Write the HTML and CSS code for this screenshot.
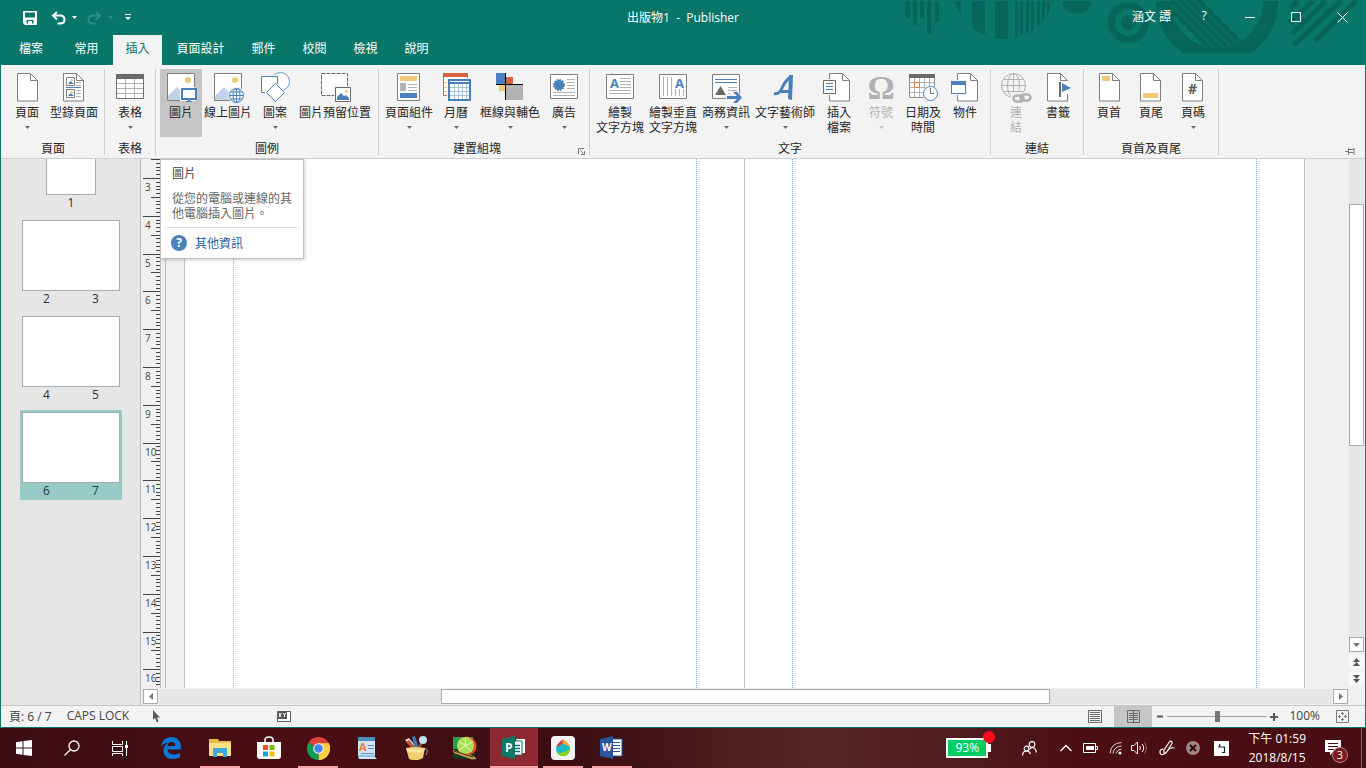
FILE: index.html
```html
<!DOCTYPE html>
<html lang="zh-Hant">
<head>
    <meta charset="UTF-8">
    <meta name="viewport" content="width=device-width, initial-scale=1.0">
    <title>出版物1 - Publisher</title>
    <link rel="stylesheet" href="styles.css">
</head>
<body>
    <!-- shared shapes -->
    <svg class="defs" width="0" height="0" aria-hidden="true">
        <symbol id="sheet" viewBox="0 0 22 29">
            <path d="M.5.5h13l7 7v20.500h-20z" fill="#fff" stroke="#7f7f7f"/>
            <path d="M13.500.5v7h7" fill="none" stroke="#7f7f7f"/>
        </symbol>
        <symbol id="photo" viewBox="0 0 28 28">
            <path d="M.5.5h27v27h-27z" fill="#fff" stroke="#7f7f7f"/>
            <path d="M1 23l9-9 13 13H1z" fill="#c0d3e8"/>
            <circle cx="21" cy="7" r="3" fill="#f0c878"/>
        </symbol>
        <symbol id="caret" viewBox="0 0 5 3"><path d="M0 0h5L2.500 3z" fill="currentColor"/></symbol>
    </svg>

    <div class="window">
        <header class="titlebar">
            <svg class="pattern" width="486" height="65" viewBox="0 0 486 65" aria-hidden="true">
                <defs>
                    <clipPath id="disc"><circle cx="125" cy="-12" r="51"/></clipPath>
                    <clipPath id="bowl"><circle cx="338" cy="2" r="46"/></clipPath>
                    <clipPath id="cut"><path d="M270 1h140v52H270z"/></clipPath>
                </defs>
                <g fill="#07655a">
                    <path d="M26 1h5v17h-5zM34 1h4v24h-4zM41 1h4v17h-4zM48 1h4v33h-4zM56 1h4v21h-4z"/>
                    <path clip-path="url(#disc)" d="M70 1h12v50H70zM93 1h13v50H93zM116 1h13v50h-13zM136 1h3v50h-3zM141 1h3v50h-3zM147 1h3v50h-3zM152 1h3v50h-3zM158 1h3v50h-3zM163 1h3v50h-3zM168 1h3v50h-3zM173 1h3v50h-3z"/>
                    <path d="M183 1h29a14.500 12.500 0 0 1-29 0z"/>
                    <circle cx="249.500" cy="22.500" r="7.500"/>
                </g>
                <g fill="none" stroke="#07655a">
                    <circle cx="249.500" cy="22.500" r="17" stroke-width="7"/>
                    <circle cx="338" cy="2" r="53.500" stroke-width="15" clip-path="url(#cut)"/>
                    <path clip-path="url(#bowl)" stroke-width="5" d="M316-3l60 60M307-3l60 60M298-3l60 60M289-3l60 60M277-6l60 60"/>
                    <path stroke-width="5" d="M477 1l-41 40M462 1l-47 44M447 1l-34 33M434 1l-24 22M419 1l-8 7"/>
                </g>
            </svg>
            <div class="quick">
                <button type="button" aria-label="儲存"><svg width="14" height="14" viewBox="0 0 14 14"><path fill="#fff" fill-rule="evenodd" d="M0 0h14v14H2l-2-2zM2 1.500v5h10v-5zM3.500 9v3.500H5V10h4v2.500h1.500V9z"/></svg></button>
                <button type="button" aria-label="復原"><svg width="15" height="14" viewBox="0 0 15 14"><path fill="none" stroke="#fff" stroke-width="2" d="M6 1L2 4.500 6 8.500M2 4.500h7q4.500 0 4.500 4T9 12.500H6.500"/></svg></button>
                <button type="button" aria-label="復原選項"><svg width="5" height="3"><use href="#caret"/></svg></button>
                <button type="button" class="dim" aria-label="重做"><svg width="15" height="14" viewBox="0 0 15 14"><path fill="none" stroke="#2f8e83" stroke-width="2" d="M9 1l4 3.500L9 8.500M13 4.500H6Q1.500 4.500 1.500 8.500T6 12.500h2.500"/></svg></button>
                <button type="button" class="dim" aria-label="重做選項"><svg width="5" height="3"><use href="#caret"/></svg></button>
                <button type="button" class="more" aria-label="自訂"><svg width="6" height="7" viewBox="0 0 6 7"><path fill="#fff" d="M0 0h6v1H0zM0 3h6L3 6z"/></svg></button>
            </div>
            <h1>出版物1&nbsp; -&nbsp; Publisher</h1>
            <div class="controls">
                <span class="user">涵文 譚</span>
                <button type="button" class="help">?</button>
                <button type="button" aria-label="最小化"><svg width="11" height="11"><path d="M0 5.500h10" stroke="#fff"/></svg></button>
                <button type="button" aria-label="最大化"><svg width="11" height="11"><path d="M.5.5h9v9h-9z" fill="none" stroke="#fff"/></svg></button>
                <button type="button" aria-label="關閉"><svg width="11" height="11"><path d="M.5.5l10 10M10.500.5l-10 10" stroke="#fff"/></svg></button>
            </div>
        </header>

        <nav class="tabs">
            <a href="#" class="file">檔案</a>
            <a href="#">常用</a>
            <a href="#" class="active">插入</a>
            <a href="#" class="long">頁面設計</a>
            <a href="#">郵件</a>
            <a href="#">校閱</a>
            <a href="#">檢視</a>
            <a href="#">說明</a>
        </nav>

        <div class="ribbon">
            <section class="group">
                <div class="tools">
                    <button type="button" class="tool">
                        <svg class="icon" viewBox="0 0 32 32"><use href="#sheet" x="6" y="2" width="22" height="29"/></svg>
                        <span>頁面</span><svg class="caret"><use href="#caret"/></svg>
                    </button>
                    <button type="button" class="tool w4">
                        <svg class="icon" viewBox="0 0 32 32"><use href="#sheet" x="5" y="2" width="22" height="29"/>
                            <path d="M8.500 6.500h8v8h-8zM8.500 18.500h8v8h-8z" fill="#fff" stroke="#7f7f7f"/>
                            <path d="M10 13l2.500-3 3.500 3zM10 25l2.500-3 3.500 3zM8 16h15v1H8z" fill="#4a80bb"/>
                            <path d="M13 8h2v2h-2zM13 20h2v2h-2z" fill="#f0c878"/>
                            <path d="M18 11.500h5M18 14.500h5M18 19.500h5M18 22.500h5M18 25.500h5" stroke="#b2b2b2"/></svg>
                        <span>型錄頁面</span>
                    </button>
                </div>
                <h2>頁面</h2>
            </section>

            <section class="group">
                <div class="tools">
                    <button type="button" class="tool">
                        <svg class="icon" viewBox="0 0 32 32"><path d="M2.500 3.500h27v24h-27z" fill="#fff" stroke="#6f6f6f"/>
                            <path d="M2 3h28v5H2z" fill="#6a6a6a"/>
                            <path d="M11.500 8v19M20.500 8v19M3 12.500h26M3 17.500h26M3 22.500h26" stroke="#b2b2b2"/></svg>
                        <span>表格</span><svg class="caret"><use href="#caret"/></svg>
                    </button>
                </div>
                <h2>表格</h2>
            </section>

            <section class="group">
                <div class="tools">
                    <div class="hint">
                        <button type="button" class="tool pressed">
                            <svg class="icon" viewBox="0 0 32 32"><use href="#photo" x="2" y="2" width="28" height="28"/>
                                <path d="M15 16h17v16H15z" fill="#c6c6c6"/><path d="M15 16h15v14H15z" fill="#fff"/>
                                <path d="M17 18h14v10H17z" fill="#fff" stroke="#4a80bb" stroke-width="2"/>
                                <path d="M23 29h2v1h2v1h-6v-1h2z" fill="#4a80bb"/></svg>
                            <span>圖片</span>
                        </button>
                        <div class="tooltip" role="tooltip">
                            <h3>圖片</h3>
                            <p>從您的電腦或連線的其他電腦插入圖片。</p>
                            <a href="#"><span class="mark">?</span>其他資訊</a>
                        </div>
                    </div>
                    <button type="button" class="tool w4">
                        <svg class="icon" viewBox="0 0 32 32"><use href="#photo" x="2" y="2" width="28" height="28"/>
                            <circle cx="24.500" cy="24.500" r="7" fill="#fff" stroke="#f3f3f3" stroke-width="3"/>
                            <g fill="#fff" stroke="#4a80bb"><circle cx="24.500" cy="24.500" r="7"/><ellipse cx="24.500" cy="24.500" rx="3.500" ry="7"/><path d="M24.500 17.500v14M17.500 24.500h14M18.500 21h12M18.500 28h12"/></g></svg>
                        <span>線上圖片</span>
                    </button>
                    <button type="button" class="tool">
                        <svg class="icon" viewBox="0 0 32 32"><circle cx="21.500" cy="10.500" r="9" fill="#fff" stroke="#6f9bd0"/>
                            <path d="M1 4h19v19H1z" fill="#f3f3f3"/><path d="M2.500 5.500h16v16h-16z" fill="#fff" stroke="#4a80bb"/>
                            <path d="M16.500 10.500l11 11-11 11-11-11z" fill="#f3f3f3"/><path d="M16.500 12.500l9 9-9 9-9-9z" fill="#fff" stroke="#4a80bb"/></svg>
                        <span>圖案</span><svg class="caret"><use href="#caret"/></svg>
                    </button>
                    <button type="button" class="tool w6">
                        <svg class="icon" viewBox="0 0 32 32"><path d="M2.500 2.500h26v22h-26z" fill="#fff" stroke="#6a6a6a" stroke-dasharray="4 1"/>
                            <path d="M15 15h17v17H15z" fill="#f3f3f3"/><path d="M16.500 16.500h15v14h-15z" fill="#fff" stroke="#6a6a6a"/>
                            <path d="M18 29v-3l4-4 3 3 2-1 3 3v2z" fill="#4a80bb"/><circle cx="27.500" cy="20.500" r="1.500" fill="#f0c878"/></svg>
                        <span>圖片預留位置</span>
                    </button>
                </div>
                <h2>圖例</h2>
            </section>

            <section class="group has-launcher">
                <div class="tools">
                    <button type="button" class="tool w4">
                        <svg class="icon" viewBox="0 0 32 32"><path d="M4.500 2.500h22v27h-22z" fill="#fff" stroke="#7f7f7f"/>
                            <path d="M7 5h17v5H7z" fill="#f0c878"/><path d="M7 12h6v8H7z" fill="#b2b2b2"/>
                            <path d="M15 13.500h9M15 16.500h9M15 19.500h9" stroke="#b2b2b2"/><path d="M7 22h17v5H7z" fill="#4a80bb"/></svg>
                        <span>頁面組件</span><svg class="caret"><use href="#caret"/></svg>
                    </button>
                    <button type="button" class="tool">
                        <svg class="icon" viewBox="0 0 32 32"><path d="M3.500 2.500h24v22h-24z" fill="#fff" stroke="#d8603f"/><path d="M3 2h25v4H3z" fill="#d8603f"/>
                            <path d="M7.500 7v17M11.500 7v2M15.500 7v2M19.500 7v2M23.500 7v2" stroke="#f0c878" stroke-dasharray="2 1"/>
                            <path d="M4 11.500h4M4 16.500h4M4 20.500h4" stroke="#f0c878"/>
                            <path d="M7 7h25v25H7z" fill="#f3f3f3"/>
                            <path d="M9 9h21v20H9z" fill="#fff" stroke="#4a80bb" stroke-width="2"/><path d="M9 9h21v4H9z" fill="#4a80bb"/><path d="M10 10h19v1H10z" fill="#fff"/>
                            <path d="M14.500 13v15M18.500 13v15M22.500 13v15M26.500 13v15M10 16.500h19M10 20.500h19M10 24.500h19" stroke="#a9c3e0"/></svg>
                        <span>月曆</span><svg class="caret"><use href="#caret"/></svg>
                    </button>
                    <button type="button" class="tool w5">
                        <svg class="icon" viewBox="0 0 32 32"><path d="M2 2h9v11H2z" fill="#4a80bb"/><path d="M12 6h7v7h-7z" fill="#d8603f"/><path d="M5 14h6v6H5z" fill="#f0c878"/><path d="M12 14h17v15H12z" fill="#b2b2b2"/><path d="M11.500 2v27M2 13.500h27" stroke="#000"/></svg>
                        <span>框線與輔色</span><svg class="caret"><use href="#caret"/></svg>
                    </button>
                    <button type="button" class="tool">
                        <svg class="icon" viewBox="0 0 32 32"><path d="M2.500 3.500h27v24h-27z" fill="#fff" stroke="#7f7f7f"/>
                            <circle cx="11" cy="14" r="5" fill="#4a80bb"/><circle cx="11" cy="14" r="5" fill="none" stroke="#4a80bb" stroke-width="2" stroke-dasharray="1.600 1"/>
                            <path d="M19 8.500h8M19 11.500h8M19 14.500h8M19 17.500h8M5 21.500h22M5 24.500h22" stroke="#b2b2b2"/></svg>
                        <span>廣告</span><svg class="caret"><use href="#caret"/></svg>
                    </button>
                </div>
                <h2>建置組塊</h2>
                <button type="button" class="launcher" aria-label="建置組塊選項"><svg width="7" height="7"><path d="M.5 6V.5H6" fill="none" stroke="#777"/><path d="M2.500 2.500l3 3M6.500 3v3.500H3" fill="none" stroke="#777"/></svg></button>
            </section>

            <section class="group">
                <div class="tools">
                    <button type="button" class="tool w4">
                        <svg class="icon" viewBox="0 0 32 32"><path d="M2.500 3.500h27v24h-27z" fill="#fff" stroke="#7f7f7f"/>
                            <text x="6" y="17" font-size="13" font-weight="bold" fill="#4a80bb">A</text>
                            <path d="M16 7.500h11M16 10.500h11M16 13.500h11M16 16.500h11M5 19.500h22M5 22.500h22" stroke="#b2b2b2"/></svg>
                        <span>繪製<br>文字方塊</span>
                    </button>
                    <button type="button" class="tool w4 wide">
                        <svg class="icon" viewBox="0 0 32 32"><path d="M2.500 3.500h27v24h-27z" fill="#fff" stroke="#7f7f7f"/>
                            <text x="18" y="17" font-size="13" font-weight="bold" fill="#4a80bb">A</text>
                            <path d="M6.500 6v19M10.500 6v19M14.500 6v19M18.500 18v7M22.500 18v7M26.500 18v7" stroke="#b2b2b2"/></svg>
                        <span>繪製垂直<br>文字方塊</span>
                    </button>
                    <button type="button" class="tool w4">
                        <svg class="icon" viewBox="0 0 32 32"><path d="M2.500 3.500h27v24h-27z" fill="#fff" stroke="#7f7f7f"/>
                            <path d="M5 8.500h22M5 11.500h22" stroke="#4a80bb"/><path d="M5 24l5.500-9 5.500 9z" fill="#6a6a6a"/>
                            <path d="M18 16.500h9M18 19.500h9M18 22.500h2" stroke="#b2b2b2"/>
                            <path d="M16 23h8l-3-3h6l6 6.500-5 5.500h-6l2-3h-8z" fill="#f3f3f3"/>
                            <path d="M17 25h10l-4-4h4l5 5.500-5 5.500h-4l4-4H17z" fill="#4a80bb"/></svg>
                        <span>商務資訊</span><svg class="caret"><use href="#caret"/></svg>
                    </button>
                    <button type="button" class="tool w5">
                        <svg class="icon" viewBox="0 0 32 32"><path d="M5 22.500Q10 24 13 17T22 5.500M12 20.500h9" fill="none" stroke="#4a80bb" stroke-width="3"/><path d="M20 4h4l-1 25-4-1z" fill="#4a80bb"/></svg>
                        <span>文字藝術師</span><svg class="caret"><use href="#caret"/></svg>
                    </button>
                    <button type="button" class="tool">
                        <svg class="icon" viewBox="0 0 32 32"><use href="#sheet" x="6" y="2" width="22" height="29"/>
                            <path d="M0 8h14v16H0z" fill="#f3f3f3"/><path d="M.5 9.500h12v13H.5z" fill="#fff" stroke="#6a6a6a"/>
                            <path d="M3 12.500h7M3 15.500h7M3 18.500h7" stroke="#4a80bb"/></svg>
                        <span>插入<br>檔案</span>
                    </button>
                    <button type="button" class="tool" disabled>
                        <svg class="icon" viewBox="0 0 32 32"><text x="16" y="28" font-size="34" font-weight="bold" text-anchor="middle" class="serif" fill="#b2b2b2">Ω</text></svg>
                        <span>符號</span><svg class="caret"><use href="#caret"/></svg>
                    </button>
                    <button type="button" class="tool">
                        <svg class="icon" viewBox="0 0 32 32"><path d="M2.500 3.500h25v23h-25z" fill="#fff" stroke="#8f8f8f"/><path d="M2 3h26v4H2z" fill="#6a6a6a"/>
                            <path d="M7.500 7v19M12.500 7v19M17.500 7v19M22.500 7v19M3 11.500h24M3 16.500h24M3 21.500h24" stroke="#b2b2b2"/>
                            <path d="M7.500 11.500h5v5h-5z" fill="#fff" stroke="#e07b33"/>
                            <circle cx="23.500" cy="22.500" r="8" fill="#f3f3f3"/><circle cx="23.500" cy="22.500" r="7" fill="#fff" stroke="#4a80bb"/><path d="M23.500 17v5.500H27" fill="none" stroke="#6a6a6a"/></svg>
                        <span>日期及<br>時間</span>
                    </button>
                    <button type="button" class="tool">
                        <svg class="icon" viewBox="0 0 32 32"><use href="#sheet" x="8" y="2" width="22" height="29"/>
                            <path d="M1 9h17v15H1z" fill="#f3f3f3"/><path d="M2.500 10.500h14v12h-14z" fill="#fff" stroke="#4a80bb"/><path d="M2 10h15v4H2z" fill="#4a80bb"/></svg>
                        <span>物件</span>
                    </button>
                </div>
                <h2>文字</h2>
            </section>

            <section class="group">
                <div class="tools">
                    <button type="button" class="tool" disabled>
                        <svg class="icon" viewBox="0 0 32 32"><g fill="none" stroke="#b2b2b2"><circle cx="13.500" cy="14.500" r="12"/><ellipse cx="13.500" cy="14.500" rx="6" ry="12"/><path d="M13.500 2v25M1 14.500h25M3 8.500h21M3 20.500h21"/></g>
                            <path d="M11 21h21v11H11z" fill="#f3f3f3"/><g fill="none" stroke="#b2b2b2" stroke-width="2.500"><rect x="13.500" y="24.500" width="10" height="6" rx="3"/><rect x="20.500" y="23.500" width="10" height="6" rx="3"/></g></svg>
                        <span>連<br>結</span>
                    </button>
                    <button type="button" class="tool">
                        <svg class="icon" viewBox="0 0 32 32"><use href="#sheet" x="5" y="2" width="22" height="29"/>
                            <path d="M19 10h8v13h-8z" fill="#f9f9f9"/><path d="M17 11h2v15h-2z" fill="#6a6a6a"/><path d="M20 12l9 5-9 4z" fill="#4a80bb"/></svg>
                        <span>書籤</span>
                    </button>
                </div>
                <h2>連結</h2>
            </section>

            <section class="group">
                <div class="tools">
                    <button type="button" class="tool">
                        <svg class="icon" viewBox="0 0 32 32"><use href="#sheet" x="6" y="2" width="22" height="29"/><path d="M9 5h8v5H9z" fill="#f0c878"/></svg>
                        <span>頁首</span>
                    </button>
                    <button type="button" class="tool">
                        <svg class="icon" viewBox="0 0 32 32"><use href="#sheet" x="5" y="2" width="22" height="29"/><path d="M8 22h15v5H8z" fill="#f0c878"/></svg>
                        <span>頁尾</span>
                    </button>
                    <button type="button" class="tool">
                        <svg class="icon" viewBox="0 0 32 32"><use href="#sheet" x="5" y="2" width="22" height="29"/><text x="11" y="23" font-size="14" font-weight="bold" fill="#5a5a5a">#</text></svg>
                        <span>頁碼</span><svg class="caret"><use href="#caret"/></svg>
                    </button>
                </div>
                <h2>頁首及頁尾</h2>
            </section>
            <button type="button" class="pin" aria-label="釘選功能區"><svg width="10" height="7"><path d="M0 3.500h3M3.500 0v7M3.500 1.500h5M3.500 4.500h5M9 0v7" fill="none" stroke="#777"/></svg></button>
        </div>

        <main class="workspace">
            <aside class="pages">
                <ol>
                    <li class="single"><div class="thumb"></div><span>1</span></li>
                    <li><div class="thumb"></div><span>2</span><span>3</span></li>
                    <li><div class="thumb"></div><span>4</span><span>5</span></li>
                    <li class="selected"><div class="thumb"></div><span>6</span><span>7</span></li>
                </ol>
            </aside>
            <div class="editor">
                <div class="view">
                    <svg class="ruler" id="ruler" aria-hidden="true"></svg>
                    <div class="canvas">
                        <div class="spread">
                            <div class="page"><div class="margins"></div></div>
                            <div class="page"><div class="margins"></div></div>
                        </div>
                    </div>
                    <div class="vscroll">
                        <div class="vtrack"><div class="thumbbar"></div></div>
                        <button type="button" class="arrow" aria-label="向下捲動"><svg width="7" height="4"><path d="M0 0h7L3.500 4z" fill="#777"/></svg></button>
                        <button type="button" class="jump" aria-label="上一頁"><svg width="7" height="8"><path d="M0 4l3.500-4L7 4zM0 8l3.500-4L7 8z" fill="#555"/></svg></button>
                        <button type="button" class="jump" aria-label="下一頁"><svg width="7" height="8"><path d="M0 0h7L3.500 4zM0 4h7L3.500 8z" fill="#555"/></svg></button>
                    </div>
                </div>
                <div class="hscroll">
                    <button type="button" class="arrow" aria-label="向左捲動"><svg width="4" height="7"><path d="M4 0v7L0 3.500z" fill="#777"/></svg></button>
                    <div class="htrack"><div class="thumbbar"></div></div>
                    <button type="button" class="arrow" aria-label="向右捲動"><svg width="4" height="7"><path d="M0 0v7l4-3.500z" fill="#777"/></svg></button>
                </div>
            </div>
        </main>

        <footer class="status">
            <span class="pageno">頁: 6 / 7</span>
            <span class="caps">CAPS LOCK</span>
            <svg class="pointer" width="8" height="13"><path d="M1 0v10l2-2 2 4.500 1.500-1L5 7.500h3z" fill="#5a5a5a"/></svg>
            <svg class="xy" width="14" height="11"><path d="M.5.5h13v10H.5z" fill="#fff" stroke="#5a5a5a"/><path d="M1 1h9v7H1z" fill="#5a5a5a"/><path d="M2 2l2 4M4 2L2 6M6 2l1.500 2L9 2M7.500 4v2" stroke="#fff" fill="none"/></svg>
            <div class="views">
                <button type="button" aria-label="單頁"><svg width="14" height="13"><path d="M.5.5h13v12H.5zM2 2.500h10M2 4.500h10M2 6.500h10M2 8.500h10M2 10.500h10" fill="none" stroke="#6a6a6a"/></svg></button>
                <button type="button" class="on" aria-label="雙頁"><svg width="13" height="13"><path d="M.5.5h12v12H.5zM6.500 1v11M2 3.500h9M2 5.500h9M2 7.500h9M2 9.500h9" fill="none" stroke="#6a6a6a"/></svg></button>
            </div>
            <div class="zoom">
                <button type="button" aria-label="縮小"><svg width="7" height="7"><path d="M0 3.500h6" stroke="#5a5a5a" stroke-width="2"/></svg></button>
                <input type="range" min="0" max="200" value="100" aria-label="縮放">
                <button type="button" aria-label="放大"><svg width="8" height="8"><path d="M0 4h8M4 0v8" stroke="#5a5a5a" stroke-width="2"/></svg></button>
                <span>100%</span>
                <button type="button" class="fit" aria-label="整頁"><svg width="13" height="13"><path d="M.5.5h12v12H.5z" fill="none" stroke="#7a7a7a"/><path d="M6.500 2v3M6.500 8v3M2 6.500h3M8 6.500h3M5 3.500h3M5 9.500h3M3.500 5v3M9.500 5v3" fill="none" stroke="#7a7a7a"/></svg></button>
            </div>
        </footer>
    </div>

    <div class="taskbar">
        <div class="system">
            <button type="button" aria-label="開始"><svg width="16" height="16"><path d="M0 2.200L6.500 1.200V7.500H0zM7.500 1L16 0v7.500H7.500zM0 8.500h6.500v6.300L0 13.800zM7.500 8.500H16V16l-8.500-1z" fill="#fff"/></svg></button>
            <button type="button" aria-label="搜尋"><svg width="16" height="16"><circle cx="10" cy="6" r="5" fill="none" stroke="#fff" stroke-width="1.300"/><path d="M6.500 9.500l-6 6" stroke="#fff" stroke-width="1.300"/></svg></button>
            <button type="button" aria-label="工作檢視"><svg width="16" height="15"><path d="M.5 0v3.500h10V0M.5 5.500h10v5H.5zM.5 15v-2.500h10V15M14.500 0v15" fill="none" stroke="#fff"/><path d="M13 4h3v3h-3z" fill="#fff"/></svg></button>
        </div>
        <div class="apps">
            <button type="button" aria-label="Edge"><svg width="22" height="22" viewBox="0 0 22 22"><path d="M1 9.500C2 3.500 6 0 11.500 0 17.500 0 21 4.500 21 10v2.500H7.500c.2 3.500 3 5 6.500 5 2.500 0 4.500-.7 6-1.700v4.500C18 21.500 15.500 22 13 22 7 22 3.500 18.500 3.500 13.500c0-3.500 1.800-6.200 5-8C5 5.800 2.500 7.500 1 9.500zM7.500 9h7.800c0-2.500-1.300-4-3.700-4S7.900 6.500 7.500 9z" fill="#0a78d7"/></svg></button>
            <button type="button" class="open" aria-label="檔案總管"><svg width="22" height="20" viewBox="0 0 22 20"><path d="M0 1h9l1 2h12v15H0z" fill="#e8bd4e"/><path d="M0 5h22v13H0z" fill="#fbe08a"/><path d="M4 19v-8q0-1 1-1h12q1 0 1 1v8h-4v-4H8v4z" fill="#3ba9de"/></svg></button>
            <button type="button" aria-label="Store"><svg width="24" height="24" viewBox="0 0 24 24"><path d="M8 7V4q0-3 4-3t4 3v3" fill="none" stroke="#fff" stroke-width="1.500"/><path d="M0 6h24v14q0 3-3 3H3q-3 0-3-3z" fill="#fff"/><path d="M6 9h5v5H6z" fill="#f25022"/><path d="M12.500 9h5v5h-5z" fill="#7fba00"/><path d="M6 15.500h5v5H6z" fill="#00a4ef"/><path d="M12.500 15.500h5v5h-5z" fill="#ffb900"/></svg></button>
            <button type="button" class="open" aria-label="Chrome"><svg width="23" height="23" viewBox="0 0 24 24"><path d="M12 12L1.600 6A12 12 0 0 1 22.400 6z" fill="#db4437"/><path d="M12 12L22.400 6A12 12 0 0 1 12 24z" fill="#ffcd40"/><path d="M12 12v12A12 12 0 0 1 1.600 6z" fill="#0f9d58"/><path d="M12 6.500h10.600A12 12 0 0 1 12 24l5-9z" fill="#ffcd40"/><circle cx="12" cy="12" r="5.500" fill="#f1f1f1"/><circle cx="12" cy="12" r="4.400" fill="#4285f4"/></svg></button>
            <button type="button" aria-label="WordPad"><svg width="20" height="22" viewBox="0 0 20 22"><path d="M1 2h17v18l2 2H2l-1-3z" fill="#cfe4f5"/><path d="M1 0h17v4H1z" fill="#4b8fc0"/><path d="M11 8.500h6M11 11.500h6M4 16.500h13" stroke="#5f8fba"/><path d="M1 18h17v2H1z" fill="#8fbfe0"/><text x="2" y="14" font-size="11" font-weight="bold" fill="#ee7d22">A</text></svg></button>
            <button type="button" aria-label="小畫家"><svg width="23" height="24" viewBox="0 0 23 24"><path d="M0 4l4-2 9 11-4 1z" fill="#e8e0d8"/><path d="M1 6l3-2 8 9-3 1z" fill="#c8543b"/><path d="M7 1l3-1 4 13-4 1z" fill="#3e79bd"/><path d="M12 12l5-9 2 1-4 9z" fill="#8b5a2b"/><circle cx="18" cy="4" r="4" fill="#bfe0f2"/><path d="M20 12q4 2 1 7" fill="none" stroke="#999"/><path d="M1 12q9-2 19 0l-2 10q-7 4-14 1z" fill="#f2cf73"/><path d="M1 12q9 3 19 0l-1 3q-8 3-17 0z" fill="#f9e3a5"/></svg></button>
            <button type="button" aria-label="繪圖"><svg width="24" height="24" viewBox="0 0 24 24"><path d="M0 1h20v22H0z" fill="#2b9e4a"/><path d="M0 13h22v10H0z" fill="#123a20"/><circle cx="14" cy="10" r="9.500" fill="#e4502a"/><circle cx="12.500" cy="9.500" r="8.500" fill="#a8e05a"/><path d="M12.500 9.500V2M12.500 9.500L20 6M12.500 9.500l-7-4M12.500 9.500l6 6M12.500 9.500l-7 5" stroke="#e6f7b8"/><path d="M0 14l20 6 4 3-5 .5L1 17z" fill="#c9a055"/><path d="M1 15l19 6" stroke="#4a2c12"/></svg></button>
            <button type="button" class="open current" aria-label="Publisher"><svg width="24" height="24" viewBox="0 0 24 24"><path d="M14 3h9v14h-3" fill="#fff"/><path d="M11 5h9v14h-9z" fill="#fff" stroke="#0a7567"/><path d="M13 9.500h5M13 12.500h5M13 15.500h5" stroke="#0a7567" stroke-width="1.500"/><path d="M0 3l13-3v23L0 20z" fill="#08796b"/><text x="3" y="16" font-size="12" font-weight="bold" fill="#fff">P</text></svg></button>
            <button type="button" class="open" aria-label="MediBang"><svg width="24" height="24" viewBox="0 0 24 24"><rect width="24" height="24" rx="4" fill="#f2f2f2"/><circle cx="12" cy="13" r="7" fill="#17b8c9"/><path d="M5.500 11Q7 6 12 3.500q1 5-6.500 7.500z" fill="#f02d3a"/><path d="M12 3.500q5 2 6.500 7l-7-3z" fill="#f6a623"/><path d="M6 16.500q8 1 13-4-.5 7.500-7 7.500-4 0-6-3.500z" fill="#8fd11a"/></svg></button>
            <button type="button" class="open" aria-label="Word"><svg width="24" height="24" viewBox="0 0 24 24"><path d="M12 3h10v17H12z" fill="#fff" stroke="#2a5699"/><path d="M13 6.500h7M13 9.500h7M13 12.500h7M13 15.500h7" stroke="#2a5699"/><path d="M0 3l13-3v23L0 20z" fill="#2a5699"/><text x="2" y="15" font-size="10" font-weight="bold" fill="#fff">W</text></svg></button>
        </div>
        <div class="tray">
            <div class="battery"><span>93%</span></div>
            <button type="button" class="people" aria-label="連絡人"><svg width="15" height="15"><g fill="none" stroke="#fff" stroke-width="1.200"><circle cx="10" cy="3.500" r="2.800"/><circle cx="4.500" cy="7.500" r="2.300"/><path d="M.6 14.500q0-4.500 4-4.500 3 0 3.800 3M7.500 8.500q1-2 3-2 3.500.5 3.800 5"/></g></svg></button>
            <button type="button" aria-label="顯示隱藏的圖示"><svg width="12" height="8"><path d="M.5 7L6 1.500 11.500 7" fill="none" stroke="#fff" stroke-width="1.300"/></svg></button>
            <button type="button" aria-label="電源"><svg width="15" height="10"><path d="M.5.5h12v9H.5zM13 3.500h1.500v3H13" fill="none" stroke="#fff"/><path d="M3 3h8v4H3z" fill="#fff"/></svg></button>
            <button type="button" aria-label="網路"><svg width="14" height="14"><path d="M1 12.500Q2 2 12.500 1.500M4 12.500Q5 5.500 12.500 5M7 12.500Q8 8.500 12.500 8" fill="none" stroke="#ddd"/><circle cx="11" cy="12" r="1.500" fill="#fff"/></svg></button>
            <button type="button" class="volume" aria-label="音量"><svg width="17" height="14"><path d="M.5 4.500H3L6.500 1v12L3 9.500H.5zM8.500 5q2 2 0 4M11 3q3.500 4 0 8" fill="none" stroke="#fff"/><path d="M13.500 1.500q4 5.500 0 11" fill="none" stroke="#926467"/></svg></button>
            <button type="button" aria-label="手寫筆"><svg width="16" height="16"><path d="M5 10L11 1q2.500 0 2 2.500L7 13H5zM4.500 9Q1 9 1 12t3 2.500q2 0 4-3t4-3.500 3.500 0" fill="none" stroke="#fff" stroke-width="1.200"/></svg></button>
            <button type="button" aria-label="已中斷"><svg width="14" height="14"><circle cx="7" cy="7" r="7" fill="#9c8487"/><path d="M4 4l6 6M10 4l-6 6" stroke="#37090e" stroke-width="2"/></svg></button>
            <button type="button" class="ime" aria-label="輸入法"><svg width="15" height="15"><path d="M0 0h15v15H0z" fill="#fff"/><path d="M6 3L5 6h5.500v5.500H8" fill="none" stroke="#222" stroke-width="1.200"/></svg></button>
            <div class="clock"><time>下午 01:59</time><time>2018/8/15</time></div>
            <button type="button" class="notice" aria-label="通知"><svg width="16" height="16"><path d="M0 0h16v12H8l-3 3.500V12H0z" fill="#fff"/><path d="M3 3.500h10M3 6.500h10M3 9.500h6" stroke="#4b0f14"/></svg><span class="badge">3</span></button>
            <div class="desktop"></div>
        </div>
    </div>

    <script>
        // vertical ruler: one long tick per centimetre, 10 divisions
        const ruler = document.getElementById('ruler');
        const cm = 96 / 2.54;
        let marks = '';

        for (let i = 25; i <= 165; i++) {
            const y = Math.round(19 + (i / 10 - 3) * cm) + 0.5;
            const x = i % 10 === 0 ? 2 : i % 5 === 0 ? 10 : 15;
            marks += `<path d="M${x} ${y}H19"/>`;
            if (i % 10 === 0) {
                marks += `<text x="4" y="${y + 12}">${i / 10}</text>`;
            }
        }
        ruler.innerHTML = marks;
    </script>
</body>
</html>
```
FILE: styles.css
```css
* {
    box-sizing: border-box;
    margin: 0;
    padding: 0;
}

body {
    display: flex;
    flex-direction: column;
    height: 100vh;
    overflow: hidden;
    font-family: 'Open Sans', 'Noto Sans CJK TC', sans-serif;
    font-size: 12px;
    color: #262626;
}

button {
    display: flex;
    align-items: center;
    justify-content: center;
    border: none;
    background: none;
    color: inherit;
    font: inherit;
}

a {
    color: inherit;
    text-decoration: none;
}

svg {
    display: block;
}

.defs {
    position: absolute;
}

.window {
    flex: 1;
    min-height: 0;
    display: flex;
    flex-direction: column;
    border: 1px solid #087668;
    border-top: none;
}

/* title bar */
.titlebar {
    position: relative;
    display: grid;
    grid-template-columns: 1fr auto 1fr;
    align-items: center;
    height: 35px;
    background-color: #087668;
    color: #fff;
}

.pattern {
    position: absolute;
    top: 0;
    right: 0;
    z-index: 1;
}

.quick {
    display: flex;
    align-items: center;
    gap: 6px;
    padding-left: 22px;
}

.quick button:nth-child(2) {
    margin-left: 8px;
}

.quick .dim {
    color: #2f8e83;
}

.quick button:nth-child(4) {
    margin-left: 4px;
}

.quick .more {
    margin-left: 6px;
}

.titlebar h1 {
    padding-bottom: 2px;
    font-size: 12px;
    font-weight: normal;
}

.controls {
    position: relative;
    z-index: 2;
    display: flex;
    align-items: center;
    justify-content: flex-end;
}

.controls button {
    width: 46px;
    height: 32px;
}

.controls .user {
    margin-right: 10px;
    padding-bottom: 4px;
}

.controls .help {
    padding-bottom: 4px;
}

/* tabs */
.tabs {
    display: flex;
    height: 30px;
    background-color: #087668;
    color: #fff;
    line-height: 28px;
    text-align: center;
}

.tabs a {
    width: 51px;
}

.tabs .file {
    width: 60px;
}

.tabs .long {
    width: 75px;
}

.tabs .active {
    width: 49px;
    margin: 0 1px;
    background-color: #f3f3f3;
    color: #087668;
}

/* ribbon */
.ribbon {
    display: flex;
    padding: 4px 0 3px 1px;
    background-color: #f3f3f3;
    border-bottom: 1px solid #d0d0d0;
}

.group {
    position: relative;
    padding: 0 4px;
    border-right: 1px solid #d0d0d0;
}

.group h2 {
    margin-top: 6px;
    font-size: 12px;
    font-weight: normal;
    line-height: 12px;
    text-align: center;
}

.has-launcher h2 {
    padding-right: 14px;
}

.tools {
    display: flex;
    height: 68px;
}

.tool {
    flex-direction: column;
    justify-content: flex-start;
    width: 42px;
    height: 68px;
    line-height: 15px;
    white-space: nowrap;
}

.tool.w4 {
    width: 52px;
}

.tool.wide {
    width: 54px;
}

.tool.w5 {
    width: 66px;
}

.tool.w6 {
    width: 78px;
}

.tool.pressed {
    background-color: #c6c6c6;
}

.tool:disabled {
    color: #b2b2b2;
}

.tool .icon {
    flex: none;
    width: 32px;
    height: 32px;
    margin: 2px 0;
    overflow: visible;
}

.tool .caret {
    width: 5px;
    height: 3px;
    margin-top: 6px;
    color: #6a6a6a;
}

.tool:disabled .caret {
    color: #c6c6c6;
}

.serif {
    font-family: 'Liberation Serif', serif;
}

.launcher {
    position: absolute;
    right: 4px;
    bottom: 0;
}

.pin {
    margin-left: auto;
    margin-right: 10px;
    align-self: flex-end;
}

/* tooltip */
.hint {
    position: relative;
}

.tooltip {
    position: absolute;
    top: 90px;
    left: 0;
    z-index: 5;
    width: 144px;
    height: 100px;
    padding: 6px 5px;
    background-color: #fff;
    border: 1px solid #c0c0c0;
    box-shadow: 1px 1px 3px rgba(0,0,0,0.2);
    color: #666;
    line-height: 15px;
}

.tooltip h3 {
    padding-left: 6px;
    font-size: 12px;
    font-weight: normal;
    color: #444;
}

.tooltip p {
    padding: 10px 6px 6px;
    border-bottom: 1px solid #dcdcdc;
}

.tooltip a {
    display: flex;
    align-items: center;
    gap: 8px;
    padding: 7px 5px;
    color: #1f5f9c;
}

.mark {
    width: 16px;
    height: 16px;
    border-radius: 50%;
    background-color: #4a80bb;
    color: #fff;
    font-weight: bold;
    line-height: 16px;
    text-align: center;
}

/* workspace */
.workspace {
    flex: 1;
    min-height: 0;
    display: flex;
    background-color: #f0f0f0;
}

.pages {
    width: 140px;
    overflow: hidden;
    background-color: #e6e6e6;
    border-right: 1px solid #bcbcbc;
}

/* list is scrolled down a little */
.pages ol {
    display: flex;
    flex-direction: column;
    gap: 6px;
    margin: -37px 0 0 19px;
    list-style: none;
}

.pages li {
    display: flex;
    flex-wrap: wrap;
    width: 102px;
    height: 90px;
    padding: 2px;
    color: #333;
    line-height: 15px;
    text-align: center;
}

.pages li.selected {
    background-color: #99cbc6;
}

.thumb {
    width: 98px;
    height: 71px;
    background-color: #fff;
    border: 1px solid #a8acb4;
}

.single .thumb {
    width: 50px;
    margin: 0 24px;
}

.pages li span {
    flex: 1;
}

.editor {
    flex: 1;
    min-width: 0;
    display: flex;
    flex-direction: column;
}

.view {
    flex: 1;
    min-height: 0;
    display: flex;
}

.ruler {
    width: 20px;
    height: 100%;
    overflow: hidden;
    border-right: 1px solid #bcbcbc;
    stroke: #444;
}

.ruler text {
    stroke: none;
    fill: #444;
    font-size: 10px;
}

.canvas {
    flex: 1;
    margin-left: 4px;
    padding: 0 44px 0 18px;
    border-left: 1px solid #bcbcbc;
}

.spread {
    display: flex;
    height: 100%;
    background-color: #fff;
    border-left: 1px solid #c0c0c0;
}

.page {
    flex: 1;
    border-right: 1px solid #c0c0c0;
}

.margins {
    height: 100%;
    margin: 0 47px 0 48px;
    border: 1px dotted #5cc8e8;
    border-width: 0 1px;
}

.page + .page .margins {
    margin-left: 47px;
}

/* scroll bars */
.vscroll {
    display: flex;
    flex-direction: column;
    width: 15px;
    margin-right: 1px;
}

.vtrack {
    flex: 1;
    padding-top: 45px;
    background-color: #e6e6e6;
}

.thumbbar {
    background-color: #fff;
    border: 1px solid #ababab;
}

.vtrack .thumbbar {
    height: 56%;
}

.arrow {
    flex: none;
    width: 15px;
    height: 15px;
    background-color: #fff;
    border: 1px solid #ababab;
}

.jump {
    height: 14px;
    margin-top: 3px;
    background-color: #f8f8f8;
}

.vscroll .jump:last-child {
    margin-bottom: 2px;
}

.hscroll {
    display: flex;
    gap: 1px;
    height: 17px;
    padding: 1px 17px 1px 2px;
}

.htrack {
    flex: 1;
    background-color: #e6e6e6;
}

.htrack .thumbbar {
    width: 52%;
    height: 15px;
    margin-left: 24%;
}

/* status bar */
.status {
    display: flex;
    align-items: center;
    height: 22px;
    background-color: #f3f3f3;
    border-top: 1px solid #c6c6c6;
    color: #444;
}

.status span {
    padding-bottom: 2px;
}

.pageno {
    margin-left: 8px;
}

.caps {
    margin-left: 15px;
}

.pointer {
    margin-left: 23px;
}

.xy {
    margin-left: 117px;
}

.views {
    display: flex;
    height: 100%;
    margin-left: auto;
}

.views button {
    width: 38px;
}

.views .on {
    background-color: #c6c6c6;
}

.zoom {
    display: flex;
    align-items: center;
    margin: 0 16px 0 5px;
}

.zoom input {
    width: 100px;
    height: 12px;
    margin: 0 3px;
    appearance: none;
    background: linear-gradient(#a0a0a0, #a0a0a0) center / 100% 1px no-repeat;
}

.zoom input::-webkit-slider-thumb {
    appearance: none;
    width: 5px;
    height: 11px;
    background-color: #777;
}

.zoom span {
    margin-left: 11px;
}

.zoom .fit {
    margin-left: 16px;
}

/* taskbar */
.taskbar {
    display: flex;
    height: 40px;
    background: linear-gradient(90deg, #3a0d12 0%, #430d13 12%, #4b0e14 22%, #3a0e12 42%, #542627 60%, #4f1c1f 70%, #4b0e13 80%, #470e13 100%);
    color: #fff;
}

.system,
.apps {
    display: flex;
}

.system button,
.apps button {
    width: 48px;
    height: 40px;
}

.apps {
    gap: 1px;
    margin-left: 3px;
}

.apps .open {
    background: linear-gradient(#f7a3aa, #f7a3aa) center bottom / 40px 2px no-repeat;
}

.apps .current {
    background: linear-gradient(#f7a3aa, #f7a3aa) center bottom / 48px 2px no-repeat #8e2932;
}

.tray {
    display: flex;
    align-items: center;
    gap: 11px;
    margin-left: auto;
}

.battery {
    position: relative;
    width: 42px;
    height: 20px;
    margin-right: 23px;
    background-color: #0c6;
    border: 2px solid #fff;
    line-height: 16px;
    text-align: center;
}

.battery::before {
    content: '';
    position: absolute;
    top: 4px;
    right: -5px;
    width: 3px;
    height: 8px;
    background-color: #fff;
}

.battery::after {
    content: '';
    position: absolute;
    top: -9px;
    right: -9px;
    width: 12px;
    height: 12px;
    border-radius: 50%;
    background-color: #ff0d1f;
}

.people {
    margin-right: 12px;
}

.volume {
    margin-left: -3px;
}

.ime {
    margin-left: 3px;
}

.tray button {
    flex: none;
}

.clock {
    display: flex;
    flex-direction: column;
    margin: 0 8px;
    line-height: 19px;
    text-align: center;
}

.notice {
    position: relative;
}

.badge {
    position: absolute;
    top: 7px;
    left: 7px;
    width: 16px;
    height: 16px;
    border: 1px solid #b98084;
    border-radius: 50%;
    background-color: #7b1822;
    font-size: 11px;
    line-height: 14px;
}

.desktop {
    width: 5px;
    height: 40px;
    margin-left: 9px;
    border-left: 1px solid #8a6366;
}
```
